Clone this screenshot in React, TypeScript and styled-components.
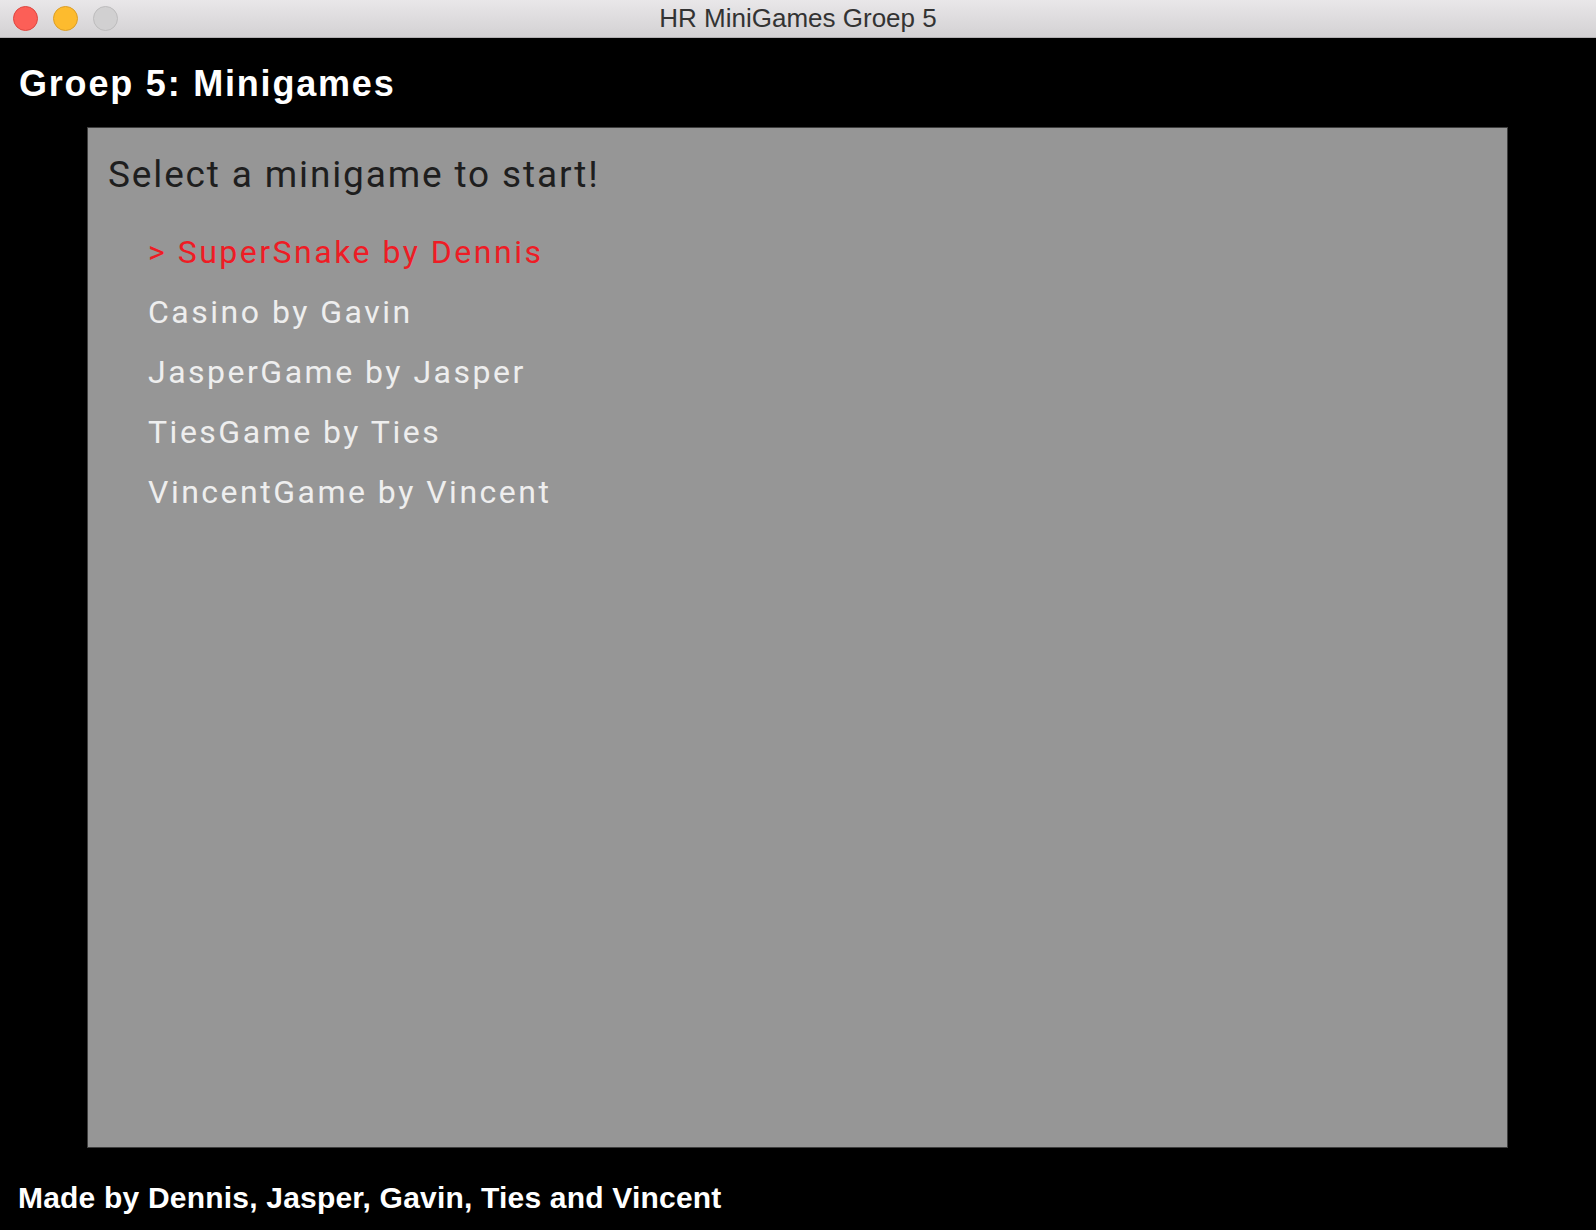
import styled, { createGlobalStyle } from 'styled-components'

const GlobalStyle = createGlobalStyle`
  html, body {
    margin: 0;
    padding: 0;
    background: #000;
  }
  * {
    box-sizing: border-box;
  }
`

const Window = styled.div`
  width: 100vw;
  height: 100vh;
  display: flex;
  flex-direction: column;
  background: #000;
  overflow: hidden;
`

const TitleBar = styled.div`
  height: 38px;
  flex-shrink: 0;
  display: grid;
  grid-template-columns: 1fr auto 1fr;
  align-items: center;
  background: linear-gradient(#e9e7e9, #d3d1d3);
  border-bottom: 1px solid #b3b1b3;
`

const Lights = styled.div`
  display: flex;
  gap: 15px;
  padding-left: 13px;
`

const Light = styled.span<{ $fill: string; $edge: string }>`
  width: 25px;
  height: 25px;
  border-radius: 50%;
  background: ${p => p.$fill};
  border: 1px solid ${p => p.$edge};
`

const WindowTitle = styled.div`
  font-family: 'Liberation Sans', Arial, sans-serif;
  font-size: 26px;
  color: #333;
`

const Header = styled.header`
  height: 89px;
  flex-shrink: 0;
  padding: 28px 0 0 19px;
`

const Heading = styled.h1`
  margin: 0;
  font-family: 'Liberation Sans', Arial, sans-serif;
  font-weight: bold;
  font-size: 36px;
  line-height: 1;
  letter-spacing: 1.8px;
  color: #fff;
`

const Panel = styled.main`
  height: 1021px;
  flex-shrink: 0;
  margin: 0 88px 0 87px;
  padding: 28px 0 0 20px;
  background: #969696;
  border: 1px solid #3e3e3e;
`

const Prompt = styled.h2`
  margin: 0;
  font-family: Roboto, 'Liberation Sans', sans-serif;
  font-weight: 400;
  font-size: 37px;
  line-height: 1;
  letter-spacing: 1.85px;
  color: #1e1e1e;
`

const GameList = styled.ul`
  list-style: none;
  margin: 29px 0 0 40px;
  padding: 0;
`

const GameItem = styled.li<{ $active: boolean }>`
  font-family: Roboto, 'Liberation Sans', sans-serif;
  font-size: 32px;
  line-height: 60px;
  letter-spacing: 2.5px;
  color: ${p => (p.$active ? '#ee1c25' : '#eeeeee')};
`

const Footer = styled.footer`
  flex: 1;
  padding: 35px 0 0 18px;
  font-family: 'Liberation Sans', Arial, sans-serif;
  font-weight: bold;
  font-size: 30px;
  line-height: 1;
  letter-spacing: 0.2px;
  color: #fff;
`

const games = [
  'SuperSnake by Dennis',
  'Casino by Gavin',
  'JasperGame by Jasper',
  'TiesGame by Ties',
  'VincentGame by Vincent',
]

export default function App() {
  const selected = 0

  return (
    <>
      <GlobalStyle />
      <Window>
        <TitleBar>
          <Lights>
            <Light $fill="#fc5f57" $edge="#de4640" />
            <Light $fill="#fdbb2e" $edge="#dc9e26" />
            <Light $fill="#d1d0d1" $edge="#bdbcbd" />
          </Lights>
          <WindowTitle>HR MiniGames Groep 5</WindowTitle>
          <div />
        </TitleBar>

        <Header>
          <Heading>Groep 5: Minigames</Heading>
        </Header>

        <Panel>
          <Prompt>Select a minigame to start!</Prompt>
          <GameList>
            {games.map((game, i) => (
              <GameItem key={game} $active={i === selected}>
                {i === selected ? `> ${game}` : game}
              </GameItem>
            ))}
          </GameList>
        </Panel>

        <Footer>Made by Dennis, Jasper, Gavin, Ties and Vincent</Footer>
      </Window>
    </>
  )
}
